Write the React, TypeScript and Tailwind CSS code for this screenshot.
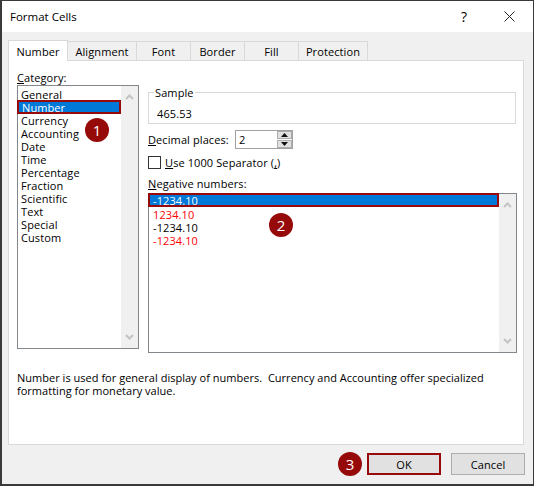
const FONT = "font-['Open_Sans','Noto_Sans',sans-serif]";

function Arrow({ down, className = "" }: { down?: boolean; className?: string }) {
  return (
    <svg width="9" height="6" viewBox="0 0 9 6" className={className}>
      <path d={down ? "M1 1l3.5 3.5L8 1" : "M1 5l3.5-3.5L8 5"} fill="none" stroke="#c4c4c4" strokeWidth="2" />
    </svg>
  );
}

function Scrollbar() {
  return (
    <div className="w-[17px] shrink-0 bg-[#f0f0f0] flex flex-col items-center justify-between py-[8px]">
      <Arrow />
      <Arrow down />
    </div>
  );
}

function Badge({ n, className }: { n: string; className: string }) {
  return (
    <div className={"absolute w-6 h-6 rounded-full bg-[#960a0a] text-white flex items-center justify-center text-[15px] leading-none " + className}>
      {n}
    </div>
  );
}

const tabs = [
  ["Alignment", "w-[69px]"],
  ["Font", "w-[54px]"],
  ["Border", "w-[54px]"],
  ["Fill", "w-[54px]"],
  ["Protection", "w-[69px]"],
];
const cats = ["Currency", "Accounting", "Date", "Time", "Percentage", "Fraction", "Scientific", "Text", "Special", "Custom"];

export default function App() {
  return (
    <div className={"relative w-[534px] h-[486px] bg-[#f0f0f0] border-t border-r border-l-2 border-b-2 border-[#3a3a3a] text-[11px] leading-[13px] tracking-[0.1px] text-black flex flex-col overflow-hidden " + FONT}>
      <div className="h-[31px] bg-white shrink-0 flex items-center pl-[8px] text-[11.5px] tracking-normal">
        <span className="flex-1">Format Cells</span>
        <span className="text-[14px] w-[12px] mr-[34px] text-center">?</span>
        <svg width="11" height="11" viewBox="0 0 11 11" className="mr-[18px]">
          <path d="M.5.5l10 10M10.5.5l-10 10" stroke="#222" strokeWidth="1" fill="none" />
        </svg>
      </div>

      <div className="flex items-end h-[28px] ml-[6px] shrink-0">
        <div className="w-[60px] h-[21px] bg-white border border-b-0 border-[#d9d9d9] flex items-center justify-center relative top-px z-10">Number</div>
        {tabs.map(([t, w]) => (
          <div key={t} className={"h-[19px] border border-l-0 border-b-0 border-[#d9d9d9] flex items-center justify-center " + w}>{t}</div>
        ))}
      </div>

      <div className="ml-[6px] w-[516px] h-[385px] shrink-0 bg-white border border-[#d9d9d9] pl-[8px] pr-[6px] pt-[10px] flex flex-col">
        <div className="flex gap-[9px] h-[282px]">
          <div className="w-[122px] flex flex-col">
            <div className="h-[14px]"><u>C</u>ategory:</div>
            <div className="h-[264px] border border-[#82878c] flex">
              <div className="flex-1 pt-[2px] pl-[3px]">
                <div className="h-[12px]">General</div>
                <div className="h-[14px] -ml-[4px] bg-[#0078d7] border-2 border-[#960a0a] text-white flex items-center pl-[3px] pt-px">Number</div>
                <div>
                  {cats.map((c) => <div key={c} className="h-[13px]">{c}</div>)}
                </div>
              </div>
              <Scrollbar />
            </div>
          </div>

          <div className="w-[369px] flex flex-col pt-[21px]">
            <fieldset className="h-[32px] w-[368px] border border-[#d9d9d9] relative">
              <span className="absolute -top-[7px] left-[5px] bg-white px-px">Sample</span>
              <span className="absolute top-[14px] left-[8px]">465.53</span>
            </fieldset>
            <div className="flex items-center mt-[6px] h-[19px]">
              <span className="w-[87px]"><u>D</u>ecimal places:</span>
              <div className="w-[58px] h-[19px] border border-[#a0a0a0] flex items-center justify-between pl-[3px]">
                <span>2</span>
                <div className="w-[15px] h-[17px] flex flex-col gap-px bg-white">
                  <div className="flex-1 bg-[#e1e1e1] border border-[#adadad] flex items-center justify-center">
                    <svg width="7" height="4" viewBox="0 0 7 4"><path d="M3.5 0L7 4H0z" fill="#111" /></svg>
                  </div>
                  <div className="flex-1 bg-[#e1e1e1] border border-[#adadad] flex items-center justify-center">
                    <svg width="7" height="4" viewBox="0 0 7 4"><path d="M3.5 4L7 0H0z" fill="#111" /></svg>
                  </div>
                </div>
              </div>
            </div>
            <div className="flex items-center mt-[7px] h-[13px] gap-[4px]">
              <div className="w-[13px] h-[13px] border border-[#333] bg-white" />
              <span><u>U</u>se 1000 Separator (<u>,</u>)</span>
            </div>
            <div className="mt-[8px] h-[16px]"><u>N</u>egative numbers:</div>
            <div className="h-[160px] border border-[#82878c] flex">
              <div className="flex-1">
                <div className="h-[14px] -mt-px -ml-px bg-[#0078d7] border-2 border-[#960a0a] text-white flex items-center pl-[3px] pt-px">-1234.10</div>
                <div className="pl-[4px] pt-[1px]">
                  <div className="h-[13px] text-[#ff0000]">1234.10</div>
                  <div className="h-[13px]">-1234.10</div>
                  <div className="h-[13px] text-[#ff0000]">-1234.10</div>
                </div>
              </div>
              <Scrollbar />
            </div>
          </div>
        </div>

        <p className="mt-[18px] w-[490px] whitespace-pre-wrap tracking-[0.02px]">{"Number is used for general display of numbers.  Currency and Accounting offer specialized\nformatting for monetary value."}</p>
      </div>

      <div className="flex justify-end gap-[10px] mt-[8px] mr-[8px]">
        <button className="w-[74px] h-[22px] bg-[#e1e1e1] border-2 border-[#960a0a] flex items-center justify-center">OK</button>
        <button className="w-[74px] h-[22px] bg-[#e1e1e1] border border-[#adadad] flex items-center justify-center">Cancel</button>
      </div>

      <Badge n="1" className="left-[83px] top-[117px]" />
      <Badge n="2" className="left-[267px] top-[212px]" />
      <Badge n="3" className="left-[336px] top-[451px]" />
    </div>
  );
}
